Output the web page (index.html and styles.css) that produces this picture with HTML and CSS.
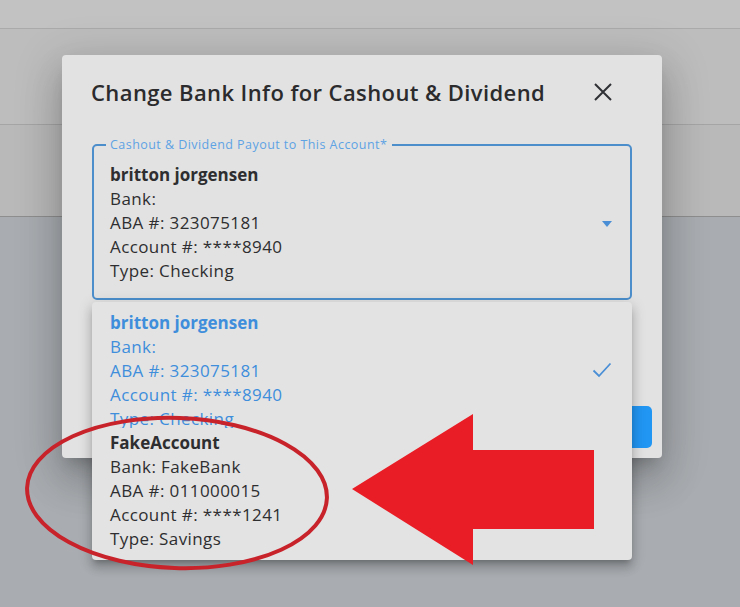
FILE: index.html
```html
<!DOCTYPE html>
<html lang="en">
<head>
<meta charset="utf-8">
<title>Change Bank Info</title>
<link rel="stylesheet" href="styles.css">
</head>
<body>
<div class="page">
  <div class="topbar"></div>
  <div class="band band-a"></div>
  <div class="band band-b"></div>
  <div class="rest"></div>
</div>

<div class="modal">
  <div class="modal-head">
    <h2 class="modal-title">Change Bank Info for Cashout &amp; Dividend</h2>
    <svg class="close" width="18" height="18" viewBox="0 0 18 18"><path d="M1 1L17 17M17 1L1 17" stroke="#2f3034" stroke-width="2" fill="none"/></svg>
  </div>
  <fieldset class="field">
    <legend class="field-label">Cashout &amp; Dividend Payout to This Account*</legend>
    <div class="field-row">
      <div class="acct">
        <div class="acct-name">britton jorgensen</div>
        <div>Bank:</div>
        <div>ABA #: 323075181</div>
        <div>Account #: ****8940</div>
        <div>Type: Checking</div>
      </div>
      <svg class="caret" width="10" height="6" viewBox="0 0 10 6"><path d="M0 0H10L5 6Z" fill="#4a8fd6"/></svg>
    </div>
  </fieldset>
  <div class="modal-foot">
    <button class="btn">Save</button>
  </div>
</div>

<ul class="menu">
  <li class="menu-item selected first">
    <div class="acct">
      <div class="acct-name">britton jorgensen</div>
      <div>Bank:</div>
      <div>ABA #: 323075181</div>
      <div>Account #: ****8940</div>
      <div>Type: Checking</div>
    </div>
    <svg class="check" width="20" height="16" viewBox="0 0 20 16"><path d="M1.5 8.5L7 14L18.5 1.5" stroke="#4a8fd6" stroke-width="1.8" fill="none"/></svg>
  </li>
  <li class="menu-item second">
    <div class="acct">
      <div class="acct-name">FakeAccount</div>
      <div>Bank: FakeBank</div>
      <div>ABA #: 011000015</div>
      <div>Account #: ****1241</div>
      <div>Type: Savings</div>
    </div>
  </li>
</ul>

<svg class="annot" width="740" height="607" viewBox="0 0 740 607">
  <ellipse cx="177" cy="493" rx="150" ry="75" transform="rotate(2 177 493)" fill="none" stroke="#c8222b" stroke-width="4"/>
  <polygon points="352,489 473,414 473,450 594,450 594,529 473,529 473,565" fill="#e91d25"/>
</svg>
</body>
</html>
```

FILE: styles.css
```css
* { box-sizing: border-box; }

html, body {
  margin: 0;
  height: 100%;
}

body {
  font-family: "Open Sans", "DejaVu Sans", sans-serif;
  background: #a9adb1;
  overflow: hidden;
  position: relative;
}

.page {
  display: flex;
  flex-direction: column;
  height: 607px;
}

.topbar {
  height: 29px;
  background: #c2c2c2;
  border-bottom: 1px solid #aaaaaa;
}

.band-a {
  height: 96px;
  background: #bdbdbd;
  border-bottom: 1px solid #a5a5a5;
}

.band-b {
  height: 92px;
  background: #b9b9b9;
  border-bottom: 1px solid #8e8e8e;
}

.rest {
  flex: 1;
  background: #a9adb1;
}

.modal {
  position: absolute;
  left: 62px;
  top: 55px;
  width: 600px;
  height: 403px;
  background: #e2e2e2;
  border-radius: 4px;
  padding: 22px 30px 0 30px;
  display: flex;
  flex-direction: column;
  box-shadow: 0 11px 15px -7px rgba(0,0,0,0.2), 0 24px 38px 3px rgba(0,0,0,0.14), 0 9px 46px 8px rgba(0,0,0,0.12);
}

.modal-head {
  display: flex;
  align-items: center;
  justify-content: space-between;
  height: 30px;
  padding-right: 20px;
}

.modal-title {
  margin: 0 0 0 -1px;
  font-size: 22px;
  font-weight: 600;
  color: #2b2b2d;
  letter-spacing: 0.4px;
  line-height: 30px;
}

.close { display: block; }

.field {
  margin: 30px 0 0 0;
  padding: 10px 18px 15px 16px;
  border: 2px solid #4b8ecb;
  border-radius: 5px;
  min-width: 0;
}

.field-label {
  margin-left: -4px;
  padding: 0 5px 0 4px;
  font-size: 12.5px;
  letter-spacing: 0.45px;
  line-height: 16px;
  color: #5ea3e4;
}

.field-row {
  display: flex;
  align-items: center;
  justify-content: space-between;
}

.acct {
  font-size: 17px;
  letter-spacing: 0.4px;
  line-height: 24px;
  color: #2e2e30;
}

.acct-name {
  font-weight: 700;
  letter-spacing: 0;
}

.caret { display: block; margin-top: 2px; }

.modal-foot {
  margin-top: 106px;
  margin-right: -20px;
  display: flex;
  justify-content: flex-end;
}

.btn {
  width: 120px;
  height: 42px;
  border: none;
  border-radius: 5px;
  background: #2196f3;
  color: #fff;
  font: inherit;
}

.menu {
  position: absolute;
  left: 92px;
  top: 302px;
  width: 540px;
  height: 258px;
  margin: 0;
  padding: 0;
  list-style: none;
  background: #e3e3e3;
  border-radius: 4px;
  box-shadow: 0 5px 5px -3px rgba(0,0,0,0.2), 0 8px 10px 1px rgba(0,0,0,0.14), 0 3px 14px 2px rgba(0,0,0,0.12);
  overflow: hidden;
}

.menu-item {
  display: flex;
  align-items: center;
  justify-content: space-between;
  padding-left: 18px;
  padding-right: 20px;
  overflow: hidden;
}

.menu-item.first {
  height: 126px;
  padding-top: 9px;
  align-items: flex-start;
}

.menu-item.second {
  padding-top: 3px;
}

.selected .acct { color: #3e8edc; }

.check { margin-top: 51px; }

.annot {
  position: absolute;
  left: 0;
  top: 0;
  pointer-events: none;
}
```
